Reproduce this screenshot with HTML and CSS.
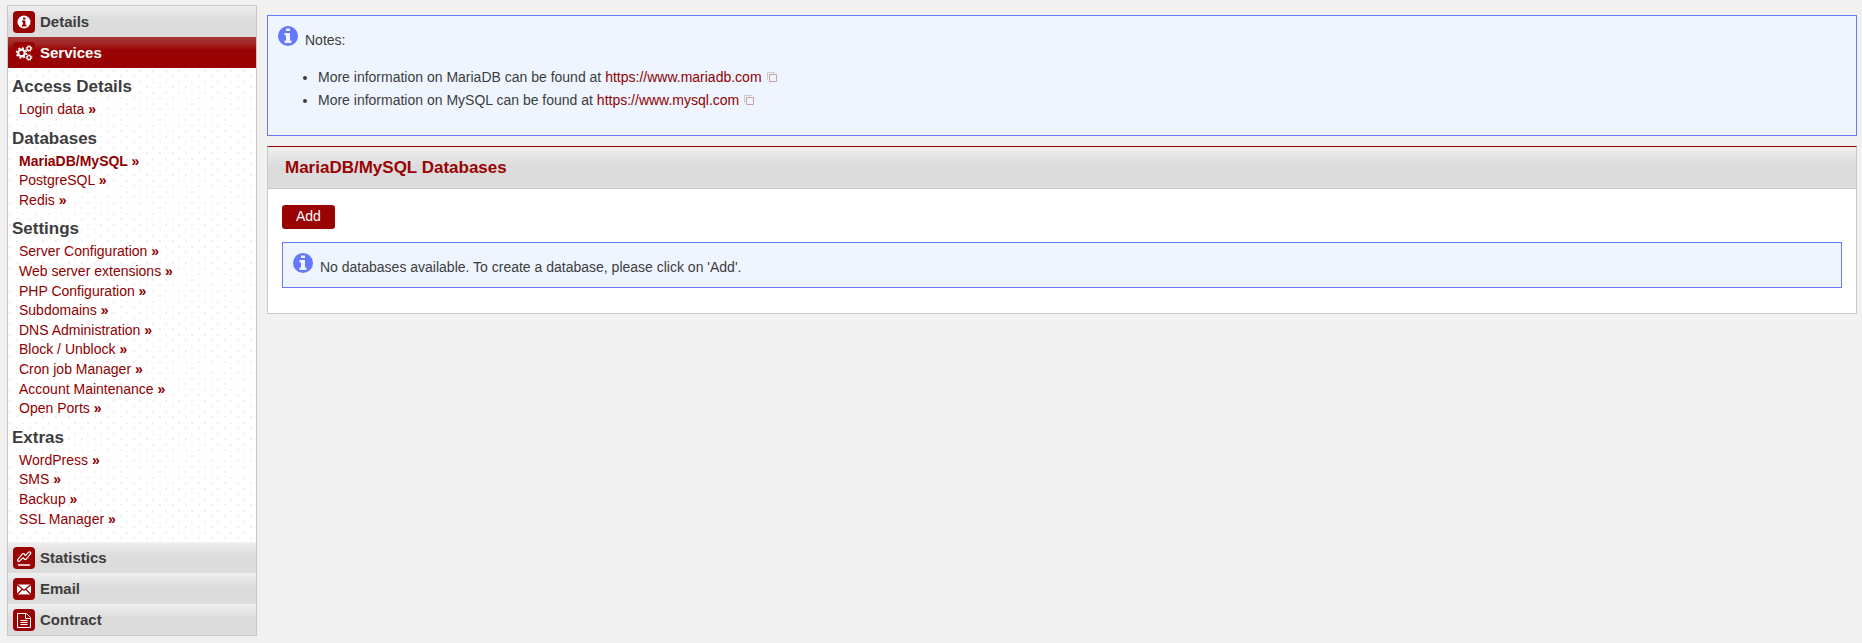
FILE: index.html
```html
<!DOCTYPE html>
<html lang="en">
<head>
    <meta charset="UTF-8">
    <meta name="viewport" content="width=device-width, initial-scale=1.0">
    <title>MariaDB/MySQL Databases</title>
    <link rel="stylesheet" href="styles.css">
</head>
<body>
    <div class="page">
        <nav class="sidebar">
            <a class="section" href="#details">
                <svg class="section-icon" viewBox="0 0 22 22"><circle cx="11" cy="11" r="6.5" fill="#fff"/><path d="M10 6.5h2.400v2H10zM9 9.500h3.400v4.300h1v1.600H9v-1.600h1V11H9z" fill="#900"/></svg>
                Details
            </a>
            <a class="section active" href="#services">
                <svg class="section-icon" viewBox="0 0 22 22" fill="none" stroke="#fff"><circle cx="8.5" cy="11" r="3.3" stroke-width="2.2"/><circle cx="8.5" cy="11" r="5" stroke-width="1.5" stroke-dasharray="1.96 1.96"/><circle cx="16" cy="6.5" r="1.9" stroke-width="1.3"/><circle cx="16" cy="6.5" r="2.9" stroke-dasharray="1.14 1.14"/><circle cx="16" cy="15.5" r="1.9" stroke-width="1.3"/><circle cx="16" cy="15.5" r="2.9" stroke-dasharray="1.14 1.14"/></svg>
                Services
            </a>
            <div class="menu">
                <h3>Access Details</h3>
                <ul>
                    <li><a href="#login">Login data <b>»</b></a></li>
                </ul>
                <h3>Databases</h3>
                <ul>
                    <li><a class="current" href="#mysql">MariaDB/MySQL <b>»</b></a></li>
                    <li><a href="#postgresql">PostgreSQL <b>»</b></a></li>
                    <li><a href="#redis">Redis <b>»</b></a></li>
                </ul>
                <h3>Settings</h3>
                <ul>
                    <li><a href="#server">Server Configuration <b>»</b></a></li>
                    <li><a href="#extensions">Web server extensions <b>»</b></a></li>
                    <li><a href="#php">PHP Configuration <b>»</b></a></li>
                    <li><a href="#subdomains">Subdomains <b>»</b></a></li>
                    <li><a href="#dns">DNS Administration <b>»</b></a></li>
                    <li><a href="#block">Block / Unblock <b>»</b></a></li>
                    <li><a href="#cron">Cron job Manager <b>»</b></a></li>
                    <li><a href="#maintenance">Account Maintenance <b>»</b></a></li>
                    <li><a href="#ports">Open Ports <b>»</b></a></li>
                </ul>
                <h3>Extras</h3>
                <ul>
                    <li><a href="#wordpress">WordPress <b>»</b></a></li>
                    <li><a href="#sms">SMS <b>»</b></a></li>
                    <li><a href="#backup">Backup <b>»</b></a></li>
                    <li><a href="#ssl">SSL Manager <b>»</b></a></li>
                </ul>
            </div>
            <a class="section" href="#statistics">
                <svg class="section-icon" viewBox="0 0 22 22" fill="none" stroke="#fff" stroke-width="1.2" stroke-linejoin="round" stroke-linecap="round"><path d="M5.500 18h11" stroke-width="1.6"/><path d="M4.500 12.800L9.200 7.200q1.800-1.500 2.600.6q.3 1 1.200.2l2.600-2.800q2-1 2.200 1.200L13.500 12q-1.800 1.300-2.800-.6q-.4-1-1.200-.2l-3 3q-2 .8-2-1.400z"/></svg>
                Statistics
            </a>
            <a class="section" href="#email">
                <svg class="section-icon" viewBox="0 0 22 22"><path d="M4 6.500h14v10H4z" fill="#fff"/><path d="M4 6.500l7 6 7-6M4 16.500l5-5M18 16.500l-5-5" fill="none" stroke="#900" stroke-width="1.3"/></svg>
                Email
            </a>
            <a class="section" href="#contract">
                <svg class="section-icon" viewBox="0 0 22 22" fill="none" stroke="#fff"><path d="M4.500 4.500h9l4 4v10h-13zM12.500 4.500v5h5M7.500 11.500h7M7.500 13.500h7M7.500 15.500h7"/></svg>
                Contract
            </a>
        </nav>

        <main class="content">
            <div class="info">
                <svg class="info-icon" viewBox="0 0 20 20"><circle cx="10" cy="10" r="10" fill="#6578fe"/><path d="M8 2.500h4V5H8zM6.500 7h5.500v7.500h1.500V17h-7v-2.500H8v-5H6.500z" fill="#eef5ff"/></svg>
                <div class="info-text">
                    <p>Notes:</p>
                    <ul>
                        <li>More information on MariaDB can be found at <a href="https://www.mariadb.com">https://www.mariadb.com<svg class="external" viewBox="0 0 10 10" fill="none"><path d="M.5 8V.5H8" stroke="#d4c4cc"/><path d="M2.500 2.500h7v7h-7z" stroke="#c9a0a6"/></svg></a></li>
                        <li>More information on MySQL can be found at <a href="https://www.mysql.com">https://www.mysql.com<svg class="external" viewBox="0 0 10 10" fill="none"><path d="M.5 8V.5H8" stroke="#d4c4cc"/><path d="M2.500 2.500h7v7h-7z" stroke="#c9a0a6"/></svg></a></li>
                    </ul>
                </div>
            </div>

            <section class="panel">
                <h2>MariaDB/MySQL Databases</h2>
                <div class="panel-body">
                    <button class="btn" type="button">Add</button>
                    <div class="info">
                        <svg class="info-icon" viewBox="0 0 20 20"><circle cx="10" cy="10" r="10" fill="#6578fe"/><path d="M8 2.500h4V5H8zM6.500 7h5.500v7.500h1.500V17h-7v-2.500H8v-5H6.500z" fill="#eef5ff"/></svg>
                        <div class="info-text">
                            <p>No databases available. To create a database, please click on 'Add'.</p>
                        </div>
                    </div>
                </div>
            </section>
        </main>
    </div>
</body>
</html>
```
FILE: styles.css
```css
body {
    margin: 0;
    background-color: #f1f1f1;
    color: #3d3d3d;
    font-family: "Liberation Sans", Arial, sans-serif;
    font-size: 14px;
    line-height: 1.4;
}
a {
    color: #900000;
    text-decoration: none;
}
a:hover {
    text-decoration: underline;
}
ul {
    margin: 0;
    padding: 0;
    list-style: none;
}
.page {
    display: flex;
    align-items: flex-start;
    gap: 10px;
    padding: 5px 5px 0 7px;
}

/* sidebar */
.sidebar {
    flex: 0 0 248px;
    border: 1px solid #c9c5c5;
}
.section {
    display: flex;
    align-items: center;
    gap: 5px;
    height: 31px;
    padding-left: 5px;
    background: linear-gradient(#f0f0f0, #e6e6e6 7px, #dcdcdc 14px);
    color: #3d3d3d;
    font-size: 15px;
    font-weight: bold;
}
.section.active {
    background: linear-gradient(#a83838, #a02424 7px, #990303 13px);
    color: #fff;
}
.section-icon {
    width: 22px;
    height: 22px;
    border-radius: 4px;
    background-color: #990303;
}
.menu {
    padding: 0 4px 13px;
    background-color: #fff;
    background-image:
        radial-gradient(circle at 2px 3px, #f1f1f1 1px, transparent 1px),
        radial-gradient(circle at 9px 8px, #f1f1f1 1px, transparent 1px);
    background-size: 13px 11px;
}
.menu h3 {
    margin: 0;
    padding: 8px 0 2px;
    font-size: 17px;
    line-height: 22px;
}
.menu ul {
    padding-left: 7px;
}
.menu .current {
    font-weight: bold;
}

/* main column */
.content {
    flex: 1;
    padding-top: 10px;
}
.info {
    display: flex;
    gap: 7px;
    padding: 10px;
    border: 1px solid #6578fe;
    background-color: #eef5ff;
}
.info-icon {
    flex: none;
    width: 20px;
    height: 20px;
}
.info-text p {
    margin: 5px 0 0;
}
.info-text ul {
    margin: 15px 0 13px;
    padding-left: 13px;
    list-style: disc;
    line-height: 23px;
}
.external {
    width: 10px;
    height: 10px;
    margin-left: 5px;
}
.panel {
    margin-top: 10px;
    border: 1px solid #c9c9c9;
    border-top-color: #990303;
    background-color: #fff;
}
.panel h2 {
    margin: 0;
    padding: 10px 17px;
    border-bottom: 1px solid #c9c9c9;
    background: linear-gradient(#f0f0f0, #e6e6e6 9px, #dcdcdc 19px);
    color: #990303;
    font-size: 17px;
    line-height: 21px;
}
.panel-body {
    padding: 16px 14px 25px;
}
.btn {
    display: block;
    height: 24px;
    margin-bottom: 13px;
    padding: 0 14px;
    border: none;
    border-radius: 3px;
    background-color: #990303;
    color: #fff;
    font: inherit;
    cursor: pointer;
}
```
